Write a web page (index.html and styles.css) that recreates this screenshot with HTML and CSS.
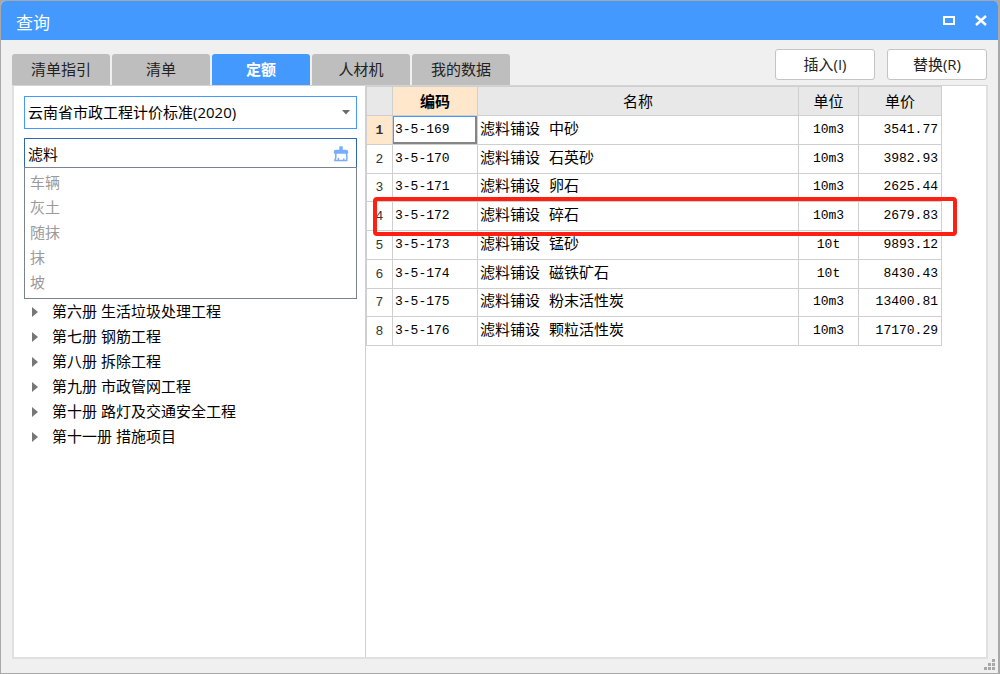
FILE: index.html
```html
<!DOCTYPE html>
<html lang="zh-CN">
<head>
<meta charset="utf-8">
<title>查询</title>
<link rel="stylesheet" href="styles.css">
</head>
<body>
<div class="window">
  <header class="titlebar">
    <h1 class="title">查询</h1>
    <button class="win-btn" type="button" aria-label="最大化">
      <svg width="14" height="12" viewBox="0 0 14 12"><path d="M2 2h10v7H2z" fill="none" stroke="#fff" stroke-width="2"/></svg>
    </button>
    <button class="win-btn" type="button" aria-label="关闭">
      <svg width="14" height="12" viewBox="0 0 14 12"><path d="M2 1l10 9M12 1L2 10" fill="none" stroke="#fff" stroke-width="2.4"/></svg>
    </button>
  </header>

  <div class="toolbar">
    <nav class="tabs" role="tablist">
      <button class="tab" type="button" role="tab">清单指引</button>
      <button class="tab" type="button" role="tab">清单</button>
      <button class="tab tab-active" type="button" role="tab" aria-selected="true">定额</button>
      <button class="tab" type="button" role="tab">人材机</button>
      <button class="tab" type="button" role="tab">我的数据</button>
    </nav>
    <div class="actions">
      <button class="action" type="button">插入(I)</button>
      <button class="action" type="button">替换(R)</button>
    </div>
  </div>

  <main class="panel">
    <section class="side">
      <div class="select-box">
        <select class="standard" aria-label="计价标准">
          <option>云南省市政工程计价标准(2020)</option>
        </select>
        <svg class="caret" width="8" height="5" viewBox="0 0 8 5"><path d="M0 0h8L4 4.5z" fill="#6a6a6a"/></svg>
      </div>
      <div class="search">
        <input class="search-input" type="text" value="滤料" aria-label="搜索">
        <button class="clear" type="button" aria-label="清空">
          <svg width="16" height="16" viewBox="0 0 16 16" fill="none" stroke="#77adff" stroke-width="1.5" stroke-linejoin="round"><path d="M7 4V1h2v3" fill="#77adff"/><path d="M1.6 6.9V5.6q0-1.2 1.2-1.2h10.4q1.2 0 1.2 1.2v1.3z" fill="#77adff"/><path d="M2.8 7v4.6l-1 3h12q.4-3.8-.4-7.6M5 14.4l.5-2.6M10.8 14.4v-1.8"/></svg>
        </button>
      </div>
      <ul class="suggest">
        <li>车辆</li>
        <li>灰土</li>
        <li>随抹</li>
        <li>抹</li>
        <li>坡</li>
      </ul>
      <ul class="tree">
        <li>第六册 生活垃圾处理工程</li>
        <li>第七册 钢筋工程</li>
        <li>第八册 拆除工程</li>
        <li>第九册 市政管网工程</li>
        <li>第十册 路灯及交通安全工程</li>
        <li>第十一册 措施项目</li>
      </ul>
    </section>

    <section class="content">
      <table class="grid">
        <colgroup><col class="col-no"><col class="col-code"><col><col class="col-unit"><col class="col-price"></colgroup>
        <thead>
          <tr><th></th><th class="current">编码</th><th>名称</th><th>单位</th><th>单价</th></tr>
        </thead>
        <tbody>
          <tr><th class="current">1</th><td class="num focus">3-5-169</td><td>滤料铺设 中砂</td><td class="num unit">10m3</td><td class="num price">3541.77</td></tr>
          <tr><th>2</th><td class="num">3-5-170</td><td>滤料铺设 石英砂</td><td class="num unit">10m3</td><td class="num price">3982.93</td></tr>
          <tr><th>3</th><td class="num">3-5-171</td><td>滤料铺设 卵石</td><td class="num unit">10m3</td><td class="num price">2625.44</td></tr>
          <tr class="marked"><th>4<span class="marker"></span></th><td class="num">3-5-172</td><td>滤料铺设 碎石</td><td class="num unit">10m3</td><td class="num price">2679.83</td></tr>
          <tr><th>5</th><td class="num">3-5-173</td><td>滤料铺设 锰砂</td><td class="num unit">10t</td><td class="num price">9893.12</td></tr>
          <tr><th>6</th><td class="num">3-5-174</td><td>滤料铺设 磁铁矿石</td><td class="num unit">10t</td><td class="num price">8430.43</td></tr>
          <tr><th>7</th><td class="num">3-5-175</td><td>滤料铺设 粉末活性炭</td><td class="num unit">10m3</td><td class="num price">13400.81</td></tr>
          <tr><th>8</th><td class="num">3-5-176</td><td>滤料铺设 颗粒活性炭</td><td class="num unit">10m3</td><td class="num price">17170.29</td></tr>
        </tbody>
      </table>
    </section>
  </main>

  <footer class="statusbar">
    <svg width="11" height="11" viewBox="0 0 11 11" fill="#a8a8a8"><path d="M8 0h3v3H8zM4 4h3v3H4zM8 4h3v3H8zM0 8h3v3H0zM4 8h3v3H4zM8 8h3v3H8z"/></svg>
  </footer>
</div>
</body>
</html>
```

FILE: styles.css
```css
* {
  box-sizing: border-box;
}

body {
  margin: 0;
  background: #a8a8a8;
  color: #000;
  font: 15px/25px "Open Sans", "Noto Sans CJK SC", sans-serif;
}

button,
input,
select {
  font: inherit;
  color: inherit;
}

ul {
  margin: 0;
  padding: 0;
  list-style: none;
}

svg {
  display: block;
}

.window {
  display: flex;
  flex-direction: column;
  min-height: 100vh;
  border: 1px solid #a8a8a8;
  border-right-width: 2px;
  border-radius: 6px 6px 0 0;
  background: #f0f0f0;
  overflow: hidden;
}

.titlebar {
  display: flex;
  align-items: center;
  gap: 12px;
  height: 39px;
  padding: 0 7px 0 15px;
  background: #4499ff;
  color: #fff;
}

.title {
  flex: 1;
  margin: 0;
  padding-top: 4px;
  font-size: 17px;
  font-weight: 400;
}

.win-btn {
  padding: 3px;
  border: 0;
  background: none;
}

.toolbar {
  display: flex;
  justify-content: space-between;
  padding: 9px 11px 0 11px;
}

.tabs {
  display: flex;
  align-items: flex-end;
  gap: 2px;
}

.tab {
  width: 98px;
  height: 31px;
  padding: 0;
  border: 0;
  border-radius: 3px 3px 0 0;
  background: #bebebe;
  color: #222;
}

.tab-active {
  background: #4499ff;
  color: #fff;
  font-weight: 700;
}

.actions {
  display: flex;
  gap: 12px;
  padding-bottom: 5px;
}

.action {
  width: 100px;
  height: 31px;
  padding: 0;
  border: 1px solid #c4c4c4;
  border-radius: 3px;
  background: #fff;
  color: #222;
}

.panel {
  flex: 1;
  display: flex;
  margin: 0 10px 0 11px;
  border: 2px solid #e0e0e0;
  border-top: 1px solid #d4d4d4;
  background: #fff;
}

.side {
  width: 352px;
  padding: 10px 8px 0 10px;
  border-right: 1px solid #d0d0d0;
}

.select-box {
  display: flex;
  align-items: center;
  height: 33px;
  margin-bottom: 9px;
  padding-right: 6px;
  border: 1px solid #4499ff;
}

.standard {
  flex: 1;
  height: 31px;
  padding: 0 3px;
  border: 0;
  background: none;
  appearance: none;
  outline: 0;
}

.search {
  display: flex;
  align-items: center;
  height: 29px;
  border: 1px solid #2f66b0;
  border-bottom: 0;
}

.search-input {
  flex: 1;
  min-width: 0;
  height: 28px;
  padding: 0 3px;
  border: 0;
  background: none;
  outline: 0;
}

.clear {
  padding: 2px 7px 0;
  border: 0;
  background: none;
}

.suggest {
  height: 132px;
  padding: 2px 5px;
  border: 1px solid #7a8290;
  color: #9a9a9a;
}

.tree li {
  display: flex;
  align-items: center;
  gap: 14px;
  padding-left: 8px;
}

.tree li::before {
  content: "";
  border: solid transparent;
  border-width: 5px 0 5px 6px;
  border-left-color: #777;
}

.content {
  flex: 1;
  min-width: 0;
  padding-right: 44px;
}

.grid {
  width: 100%;
  height: 260px;
  border-collapse: collapse;
  table-layout: fixed;
}

.grid th,
.grid td {
  padding: 0 2px;
  border: 1px solid #cfcfcf;
  line-height: 20px;
  white-space: nowrap;
}

.grid th {
  background: #e8e8e8;
  font-weight: 400;
}

.grid thead th {
  height: 29px;
}

.grid tbody th {
  padding: 2px 0 0;
  background: #fff;
  color: #333;
  font: 13px/20px "Liberation Mono", monospace;
}

.grid td {
  padding-top: 2px;
  font-family: "Liberation Mono", "Noto Sans CJK SC", monospace;
}

.grid th.current,
.grid tbody th.current {
  background: #ffe7cb;
  font-weight: 700;
}

.grid .num {
  padding-top: 0;
  font-size: 13px;
}

.grid .unit {
  text-align: center;
}

.grid .price {
  padding-right: 3px;
  text-align: right;
}

.grid .focus {
  box-shadow: inset -2px -2px #858585, inset 1px 1px #4499ff;
}

.col-no {
  width: 26px;
}

.col-code {
  width: 85px;
}

.col-unit {
  width: 60px;
}

.col-price {
  width: 83px;
}

.marked {
  position: relative;
}

.marker {
  position: absolute;
  inset: -5px -15px -5px 6px;
  border: 4px solid #ff2012;
  border-radius: 4px;
}

.statusbar {
  display: flex;
  justify-content: flex-end;
  align-items: flex-end;
  height: 14px;
  padding: 0 3px 3px;
}
```
